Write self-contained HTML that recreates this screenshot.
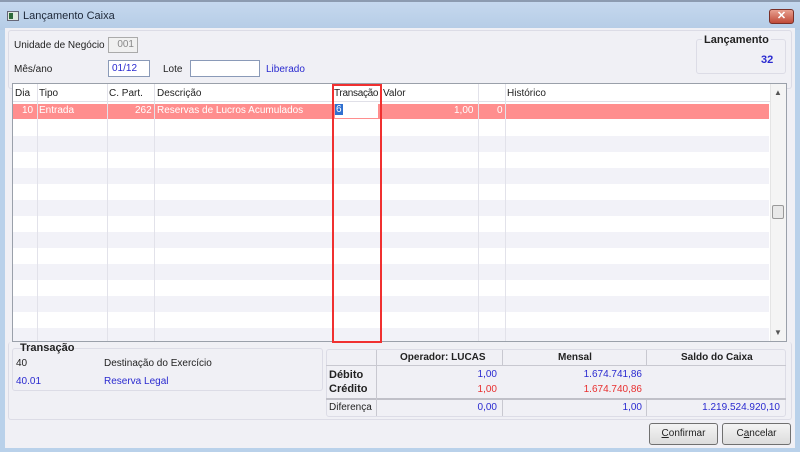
<!DOCTYPE html>
<html><head><meta charset="utf-8"><style>
*{margin:0;padding:0;box-sizing:border-box}
body{width:800px;height:452px;overflow:hidden;background:#b9d1ea;font-family:"Liberation Sans",sans-serif;font-size:10px;color:#222;position:relative}
.a{position:absolute;white-space:nowrap}
.blue{color:#2a2ad0}
.red{color:#e83030}
.b{font-weight:bold}
</style></head><body>
<div class="a" style="left:0;top:0;width:800px;height:2px;background:#8c9bb0"></div>
<div class="a" style="left:0;top:2px;width:800px;height:28px;background:linear-gradient(#c5d8ee,#b5cce6)"></div>
<div class="a" style="left:7px;top:11px;width:12px;height:10px;background:#dfe8e0;border:1px solid #667"><div style="position:absolute;left:1px;top:1px;width:4px;height:6px;background:#2e6a3a"></div></div>
<div class="a" style="left:23px;top:10px;font-size:11px;color:#1e2838">Lançamento Caixa</div>
<div class="a" style="left:769px;top:9px;width:25px;height:15px;border:1px solid #7a3028;border-radius:3px;background:linear-gradient(#e8a090,#c04a38);color:#fff;font-weight:bold;font-size:11px;text-align:center;line-height:13px">✕</div>
<div class="a" style="left:5px;top:28px;width:790px;height:420px;background:#f0f0f5"></div>
<div class="a" style="left:8px;top:30px;width:784px;height:59px;border:1px solid #dcdce6;border-radius:3px"></div>
<div class="a" style="left:14px;top:40px">Unidade de Negócio</div>
<div class="a" style="left:108px;top:37px;width:30px;height:16px;border:1px solid #aaa;background:#f0f0f0;color:#888;text-align:right;padding-right:3px;line-height:14px">001</div>
<div class="a" style="left:14px;top:64px">Mês/ano</div>
<div class="a" style="left:108px;top:60px;width:42px;height:17px;border:1px solid #8a9ab8;background:#fff;line-height:15px;padding-left:3px"><span style="color:#2a2ad0">01/12</span></div>
<div class="a" style="left:163px;top:64px">Lote</div>
<div class="a" style="left:190px;top:60px;width:70px;height:17px;border:1px solid #8a9ab8;background:#fff"></div>
<div class="a blue" style="left:266px;top:64px">Liberado</div>
<div class="a" style="left:696px;top:39px;width:90px;height:35px;border:1px solid #dcdce6;border-radius:3px"></div>
<div class="a b" style="left:702px;top:34px;background:#f0f0f5;padding:0 2px;font-size:11px">Lançamento</div>
<div class="a b blue" style="left:761px;top:54px;font-size:11px">32</div>
<!-- grid -->
<div class="a" style="left:12px;top:83px;width:775px;height:259px;border:1px solid #9aa0aa;background:#fff;overflow:hidden">
<div class="a" style="left:0;top:0;width:758px;height:18px;background:#fff;border-bottom:1px solid #e0e0e8"></div>
<div class="a" style="left:0;top:20px;width:756px;height:15px;background:#ff8e8e"></div>
<div class="a" style="left:0;top:52px;width:756px;height:16px;background:#f2f2f8"></div>
<div class="a" style="left:0;top:84px;width:756px;height:16px;background:#f2f2f8"></div>
<div class="a" style="left:0;top:116px;width:756px;height:16px;background:#f2f2f8"></div>
<div class="a" style="left:0;top:148px;width:756px;height:16px;background:#f2f2f8"></div>
<div class="a" style="left:0;top:180px;width:756px;height:16px;background:#f2f2f8"></div>
<div class="a" style="left:0;top:212px;width:756px;height:16px;background:#f2f2f8"></div>
<div class="a" style="left:0;top:244px;width:756px;height:16px;background:#f2f2f8"></div>
<div class="a" style="left:24px;top:0;width:1px;height:260px;background:#e2e2ea"></div>
<div class="a" style="left:94px;top:0;width:1px;height:260px;background:#e2e2ea"></div>
<div class="a" style="left:141px;top:0;width:1px;height:260px;background:#e2e2ea"></div>
<div class="a" style="left:465px;top:0;width:1px;height:260px;background:#e2e2ea"></div>
<div class="a" style="left:492px;top:0;width:1px;height:260px;background:#e2e2ea"></div>
<div class="a" style="left:2px;top:4px">Dia</div>
<div class="a" style="left:26px;top:4px">Tipo</div>
<div class="a" style="left:96px;top:4px">C. Part.</div>
<div class="a" style="left:144px;top:4px">Descrição</div>
<div class="a" style="left:321px;top:4px;letter-spacing:-0.3px">Transação</div>
<div class="a" style="left:370px;top:4px">Valor</div>
<div class="a" style="left:494px;top:4px">Histórico</div>
<div class="a" style="left:9px;top:21px;color:#fff">10</div>
<div class="a" style="left:26px;top:21px;color:#fff">Entrada</div>
<div class="a" style="left:122px;top:21px;color:#fff">262</div>
<div class="a" style="left:144px;top:21px;color:#fff">Reservas de Lucros Acumulados</div>
<div class="a" style="left:322px;top:20px;width:43px;height:14px;background:#fff"><span style="background:#3070d0;color:#fff;padding:0 1px">6</span></div>
<div class="a" style="left:441px;top:21px;color:#fff">1,00</div>
<div class="a" style="left:484px;top:21px;color:#fff">0</div>
<div class="a" style="left:757px;top:0;width:17px;height:258px;background:#f4f4f4;border-left:1px solid #e4e4e4"></div>
<div class="a" style="left:761px;top:4px;color:#555;font-size:8px">▲</div>
<div class="a" style="left:761px;top:244px;color:#555;font-size:8px">▼</div>
<div class="a" style="left:759px;top:121px;width:12px;height:14px;border:1px solid #999;background:#e8e8e8;border-radius:2px"></div>
</div>
<div class="a" style="left:332px;top:84px;width:50px;height:259px;border:2px solid #f03030"></div>
<!-- transação panel -->
<div class="a" style="left:8px;top:342px;width:784px;height:78px;border:1px solid #dcdce6;border-radius:3px;border-top:none"></div>
<div class="a" style="left:12px;top:348px;width:311px;height:43px;border:1px solid #dcdce6;border-radius:3px"></div>
<div class="a b" style="left:20px;top:342px;font-size:11px">Transação</div>
<div class="a" style="left:16px;top:358px">40</div>
<div class="a" style="left:104px;top:358px">Destinação do Exercício</div>
<div class="a blue" style="left:16px;top:376px">40.01</div>
<div class="a blue" style="left:104px;top:376px">Reserva Legal</div>
<!-- right table -->
<div class="a" style="left:326px;top:349px;width:460px;height:68px;border:1px solid #dcdce6;border-radius:3px"></div>
<div class="a" style="left:326px;top:365px;width:460px;height:1px;background:#c8c8d0"></div>
<div class="a" style="left:326px;top:398px;width:460px;height:2px;background:#c0c0c8"></div>
<div class="a" style="left:376px;top:350px;width:1px;height:66px;background:#c8c8d0"></div>
<div class="a" style="left:502px;top:350px;width:1px;height:16px;background:#c8c8d0"></div>
<div class="a" style="left:502px;top:400px;width:1px;height:16px;background:#c8c8d0"></div>
<div class="a" style="left:646px;top:350px;width:1px;height:16px;background:#c8c8d0"></div>
<div class="a" style="left:646px;top:400px;width:1px;height:16px;background:#c8c8d0"></div>
<div class="a b" style="left:400px;top:352px">Operador: LUCAS</div>
<div class="a b" style="left:558px;top:352px">Mensal</div>
<div class="a b" style="left:681px;top:352px">Saldo do Caixa</div>
<div class="a b" style="left:329px;top:369px;font-size:11px">Débito</div>
<div class="a b" style="left:329px;top:383px;font-size:11px">Crédito</div>
<div class="a" style="left:329px;top:402px">Diferença</div>
<div class="a blue" style="right:303px;top:369px">1,00</div>
<div class="a red" style="right:303px;top:384px">1,00</div>
<div class="a blue" style="right:303px;top:402px">0,00</div>
<div class="a blue" style="right:158px;top:369px">1.674.741,86</div>
<div class="a red" style="right:158px;top:384px">1.674.740,86</div>
<div class="a blue" style="right:158px;top:402px">1,00</div>
<div class="a blue" style="right:20px;top:402px">1.219.524.920,10</div>
<div class="a" style="left:649px;top:423px;width:69px;height:22px;border:1px solid #707070;border-radius:3px;background:linear-gradient(#f4f4f4,#dcdcdc);text-align:center;line-height:20px"><u>C</u>onfirmar</div>
<div class="a" style="left:722px;top:423px;width:69px;height:22px;border:1px solid #707070;border-radius:3px;background:linear-gradient(#f4f4f4,#dcdcdc);text-align:center;line-height:20px">C<u>a</u>ncelar</div>
</body></html>
